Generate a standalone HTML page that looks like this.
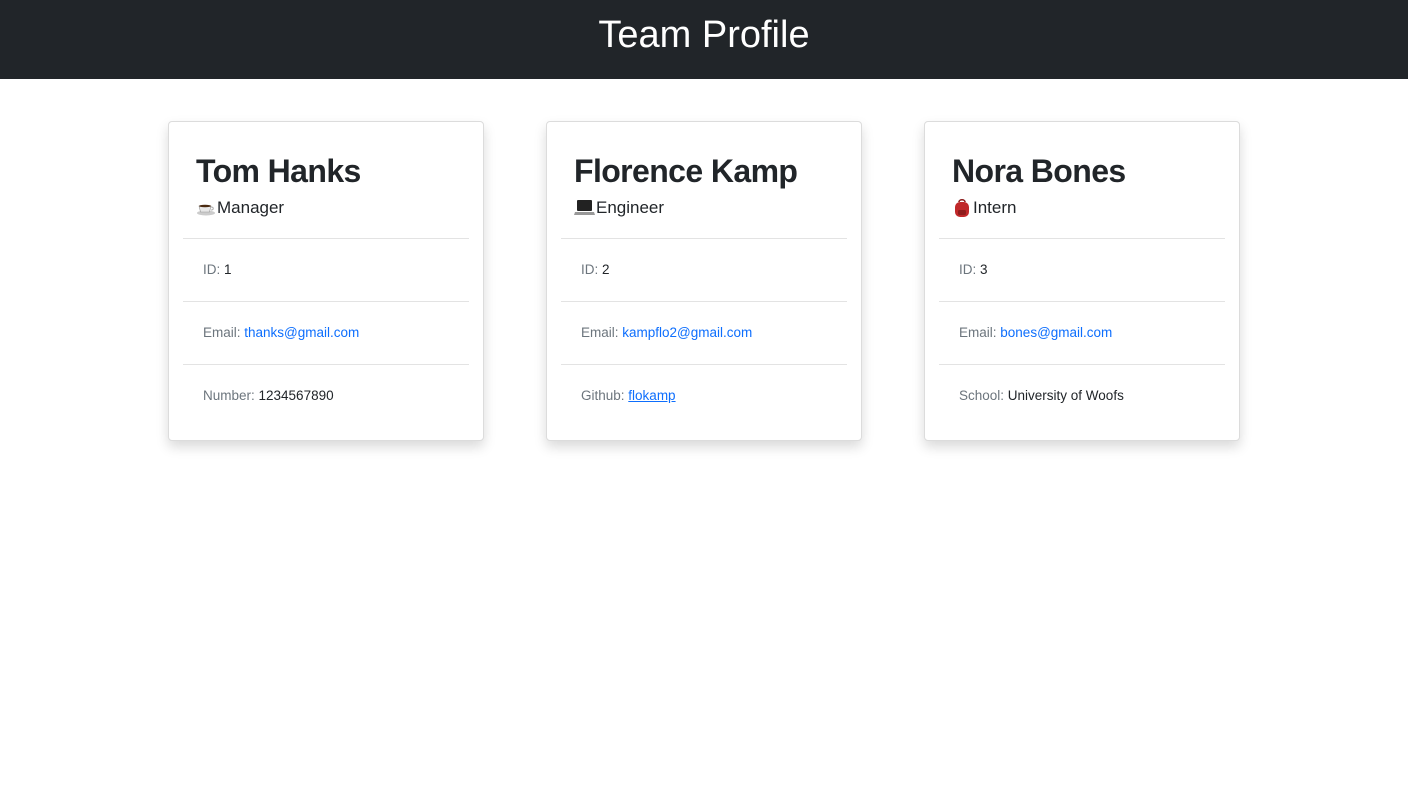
<!DOCTYPE html>
<html><head><meta charset="utf-8"><style>
body{margin:0;background:#fff;font-family:"Liberation Sans",sans-serif;color:#212529;}
.hdr{height:79px;background:#212529;color:#fff;text-align:center;font-size:38px;line-height:70px;}
.card{position:absolute;top:121px;width:314px;height:318px;border:1px solid #dcdcdc;border-radius:4px;box-shadow:0 6px 12px rgba(0,0,0,.15);background:#fff;}
.name{position:absolute;left:27px;top:31px;font-size:32px;font-weight:bold;letter-spacing:-0.6px;}
.role{position:absolute;left:27px;top:76px;font-size:17px;display:flex;align-items:center;}
.role svg{margin-right:1px}
.hr{position:absolute;left:14px;right:14px;height:1px;background:#e3e3e3;}
.row{position:absolute;left:34px;font-size:13.5px;color:#212529;}
.row span{color:#6c757d}
a{color:#0d6efd;text-decoration:none}
</style></head><body>
<div class="hdr">Team Profile</div>

<div class="card" style="left:168px">
<div class="name">Tom Hanks</div>
<div class="role"><svg width="20" height="16" viewBox="0 0 20 16"><ellipse cx="10" cy="13" rx="9" ry="2.5" fill="#ccc"/><path d="M3 6h12l-1.5 6h-9z" fill="#e8e8e8" stroke="#999" stroke-width=".6"/><ellipse cx="9" cy="6" rx="6" ry="1.3" fill="#4a2a10"/><path d="M15 7c3 0 3 3 0 3" stroke="#aaa" fill="none"/></svg>Manager</div>
<div class="hr" style="top:116px"></div>
<div class="row" style="top:140px"><span>ID:</span> 1</div>
<div class="hr" style="top:179px"></div>
<div class="row" style="top:203px"><span>Email:</span> <a>thanks@gmail.com</a></div>
<div class="hr" style="top:242px"></div>
<div class="row" style="top:266px"><span>Number:</span> 1234567890</div>
</div>

<div class="card" style="left:546px">
<div class="name">Florence Kamp</div>
<div class="role"><svg width="21" height="18" viewBox="0 0 21 18"><rect x="3" y="1" width="15" height="11" rx="1" fill="#222"/><path d="M1 13h19l1 3H0z" fill="#999"/></svg>Engineer</div>
<div class="hr" style="top:116px"></div>
<div class="row" style="top:140px"><span>ID:</span> 2</div>
<div class="hr" style="top:179px"></div>
<div class="row" style="top:203px"><span>Email:</span> <a>kampflo2@gmail.com</a></div>
<div class="hr" style="top:242px"></div>
<div class="row" style="top:266px"><span>Github:</span> <a style="text-decoration:underline">flokamp</a></div>
</div>

<div class="card" style="left:924px">
<div class="name">Nora Bones</div>
<div class="role"><svg width="20" height="20" viewBox="0 0 20 20"><path d="M7 4c0-3 6-3 6 0" stroke="#8a1a1a" stroke-width="1.5" fill="none"/><rect x="3" y="4" width="14" height="15" rx="5" fill="#c0282a"/><rect x="6" y="12" width="8" height="5" rx="1.5" fill="#8f1c1c"/></svg>Intern</div>
<div class="hr" style="top:116px"></div>
<div class="row" style="top:140px"><span>ID:</span> 3</div>
<div class="hr" style="top:179px"></div>
<div class="row" style="top:203px"><span>Email:</span> <a>bones@gmail.com</a></div>
<div class="hr" style="top:242px"></div>
<div class="row" style="top:266px"><span>School:</span> University of Woofs</div>
</div>
</body></html>
